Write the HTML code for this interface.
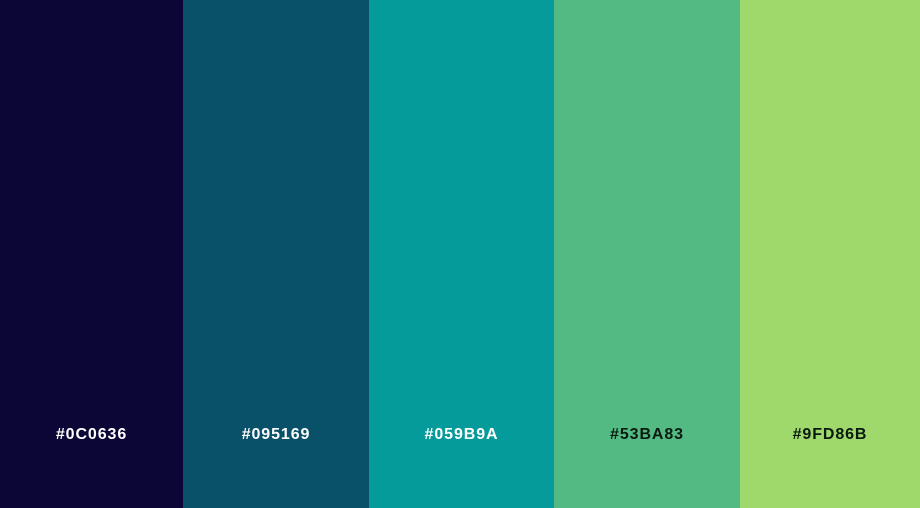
<!DOCTYPE html>
<html><head><meta charset="utf-8"><style>
*{margin:0;padding:0;box-sizing:border-box}
body{width:920px;height:508px;display:flex;overflow:hidden;font-family:"Liberation Sans",sans-serif}
div{height:508px;position:relative}
span{position:absolute;left:0;right:0;top:425px;text-align:center;font-weight:bold;font-size:16px;letter-spacing:0.9px;line-height:20px}
</style></head><body>
<div style="width:183px;background:#0C0636;color:#fff"><span>#0C0636</span></div>
<div style="width:186px;background:#095169;color:#fff"><span>#095169</span></div>
<div style="width:185px;background:#059B9A;color:#fff"><span>#059B9A</span></div>
<div style="width:186px;background:#53BA83;color:#0a1a10"><span>#53BA83</span></div>
<div style="width:180px;background:#9FD86B;color:#0a1a10"><span>#9FD86B</span></div>
</body></html>
